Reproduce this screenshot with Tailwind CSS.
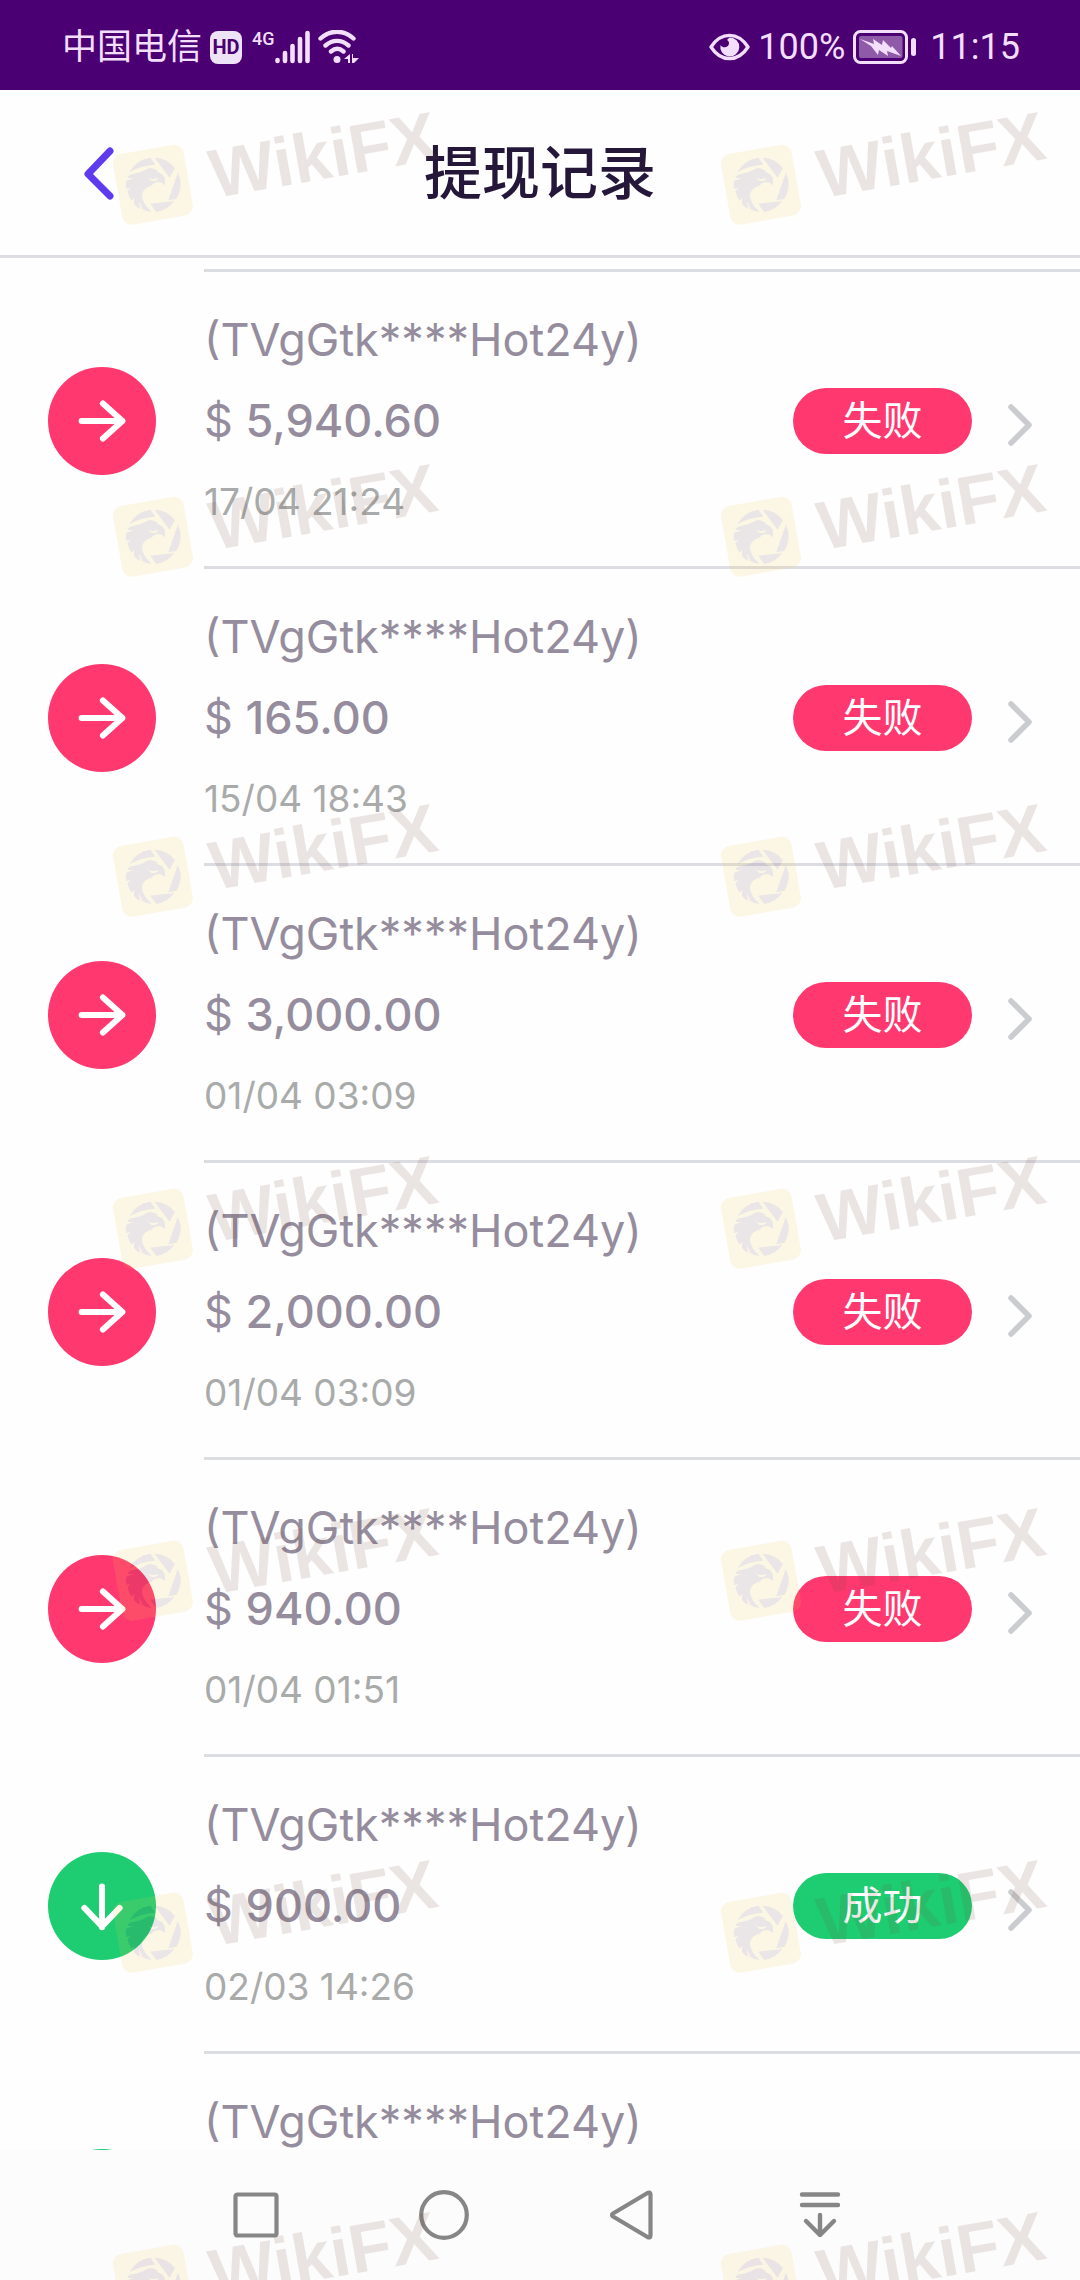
<!DOCTYPE html>
<html lang="zh-CN">
<head>
  <meta charset="UTF-8">
  <meta name="viewport" content="width=device-width, initial-scale=1.0">
  <title>提现记录</title>
  <script src="https://cdn.jsdelivr.net/npm/@tailwindcss/browser@4"></script>
</head>
<body class="relative flex h-screen flex-col overflow-hidden bg-[#fefefe] font-['Inter','Noto_Sans_CJK_SC',sans-serif]">

  <!-- status bar -->
  <div class="flex h-[90px] shrink-0 items-center justify-between bg-[#4a0072] pt-1 pr-[60px] pl-[62px] font-['Roboto','Noto_Sans_CJK_SC',sans-serif] text-[36px] leading-none text-[#f3defc]">
    <div class="flex items-center">
      <span class="text-[35px]">中国电信</span>
      <span class="ml-2 flex h-[33px] w-8 items-center justify-center rounded-lg bg-[#eee2f6] text-[20px] font-bold text-[#4a0072]">HD</span>
      <span class="ml-[10px] self-start text-[18px] font-medium">4G</span>
      <svg class="h-[34px] w-[35px]" viewBox="0 0 35 34" fill="none" stroke="currentColor" stroke-width="4.6" stroke-linecap="round">
        <path d="M2.5 30v1M10 23v8M17.500 16v15M25 9v22M32.500 3v28"/>
      </svg>
      <svg class="ml-2 h-[34px] w-[42px]" viewBox="0 0 42 34" fill="none" stroke="currentColor" stroke-width="4.4" stroke-linecap="round">
        <path d="M2.500 8.500C12-.5 26-.5 35.500 8.500M7.500 15.500c7-6.200 16-6.200 23 0M13 21.500c4-3.500 8.500-3.500 12.500 0"/>
        <circle cx="19" cy="29.500" r="3.500" fill="currentColor" stroke="none"/>
        <path d="M26 29l6-5v9h-2v-4zM34 24h1v4h6l-5 5h-2z" fill="currentColor" stroke="none"/>
      </svg>
    </div>
    <div class="flex items-center">
      <svg class="mr-2 h-[28px] w-[41px]" viewBox="0 0 41 28">
        <path d="M2 14C12-1.500 29-1.500 39 14 29 29.500 12 29.500 2 14z" fill="none" stroke="currentColor" stroke-width="3.400" stroke-linejoin="round"/>
        <path d="M20.500 4.500a9.500 9.500 0 1 1-9 7.500c2 3.500 8 3 8.500-1.500.2-2-1-3-2-3.500z" fill="currentColor"/>
      </svg>
      <span>100%</span>
      <svg class="ml-2 h-[34px] w-[63px]" viewBox="0 0 63 34">
        <rect x="1.500" y="1.500" width="52" height="31" rx="6" fill="none" stroke="currentColor" stroke-width="3"/>
        <rect x="6" y="6" width="43.500" height="22" rx="2" fill="#8f5aa8"/>
        <path d="M7 9l14 5-1-5 9 6 1-5 8 8 1-2 9 10-14-5 1 5-9-6-1 5-7-9z" fill="currentColor"/>
        <rect x="58" y="8" width="5" height="18" rx="2.500" fill="currentColor"/>
      </svg>
      <span class="ml-[14px]">11:15</span>
    </div>
  </div>

  <!-- title bar -->
  <header class="relative flex h-[168px] shrink-0 items-center justify-center border-b-3 border-[#dcdce3]">
    <button type="button" aria-label="返回" class="absolute left-[82px] flex items-center">
      <svg class="h-[54px] w-[33px]" viewBox="0 0 33 54" fill="none" stroke="#5f3bee" stroke-width="7" stroke-linecap="round" stroke-linejoin="round">
        <path d="M28 5L6 28l22 22"/>
      </svg>
    </button>
    <h1 class="text-[58px] leading-none font-medium text-[#25173a]">提现记录</h1>
  </header>

  <!-- withdrawal list -->
  <main class="min-h-0 flex-1 overflow-hidden pt-[11px]">
    <ul id="records"></ul>
  </main>

  <!-- system navigation -->
  <nav class="flex h-[130px] shrink-0 items-center justify-center bg-[#fcfcfc] pr-1 text-[#868686]">
    <button type="button" aria-label="最近任务" class="flex w-[188px] justify-center">
      <svg class="size-[50px]" viewBox="0 0 50 50" fill="none" stroke="currentColor" stroke-width="4.200"><rect x="4.500" y="4.500" width="41" height="41" rx="2"/></svg>
    </button>
    <button type="button" aria-label="主页" class="flex w-[188px] justify-center">
      <svg class="size-[50px]" viewBox="0 0 50 50" fill="none" stroke="currentColor" stroke-width="4.200"><circle cx="25" cy="25" r="22.800"/></svg>
    </button>
    <button type="button" aria-label="后退" class="flex w-[188px] justify-center">
      <svg class="size-[50px]" viewBox="0 0 50 50" fill="none" stroke="currentColor" stroke-width="4.200" stroke-linejoin="round"><path d="M43.500 4.500v41q0 3-3 1.500L6 26.500q-2-1.500 0-3L40.500 3q3-1.500 3 1.500z"/></svg>
    </button>
    <button type="button" aria-label="通知栏" class="flex w-[188px] justify-center">
      <svg class="size-[50px]" viewBox="0 0 50 50" fill="none" stroke="currentColor" stroke-width="4.400" stroke-linecap="round" stroke-linejoin="round"><path d="M7 4.500h36M7 15h36M25 25v20M11 31l14 14 14-14"/></svg>
    </button>
  </nav>

  <!-- watermark layer -->
  <div id="watermarks" class="pointer-events-none absolute inset-0 flex flex-col gap-[280px] overflow-hidden pt-[127px] pl-[115px]" aria-hidden="true"></div>

  <script>
    const records = [
      { amount: '5,940.60', date: '17/04 21:24', ok: false },
      { amount: '165.00', date: '15/04 18:43', ok: false },
      { amount: '3,000.00', date: '01/04 03:09', ok: false },
      { amount: '2,000.00', date: '01/04 03:09', ok: false },
      { amount: '940.00', date: '01/04 01:51', ok: false },
      { amount: '900.00', date: '02/03 14:26', ok: true },
      { amount: '900.00', date: '02/03 14:26', ok: true }
    ];

    const arrows = {
      right: 'M5 25h44M28 6l21 19-21 19',
      down: 'M27 4v44M8 27l19 20 19-20'
    };

    document.getElementById('records').innerHTML = records.map(r => `
      <li class="flex">
        <div class="flex w-[204px] shrink-0 items-center pt-[30px] pb-6 pl-12">
          <div class="flex size-[108px] items-center justify-center rounded-full ${r.ok ? 'bg-[#1ecd72]' : 'bg-[#ff396f]'}">
            <svg class="size-[50px]" viewBox="0 0 54 50" fill="none" stroke="#fff" stroke-width="6.500" stroke-linecap="round" stroke-linejoin="round"><path d="${r.ok ? arrows.down : arrows.right}"/></svg>
          </div>
        </div>
        <div class="flex flex-1 items-center border-t-3 border-[#dcdce3] pt-[27px] pr-12 pb-6 text-[45px] leading-[81px] text-[#958d9d]">
          <div class="flex-1">
            <p>(TVgGtk****Hot24y)</p>
            <p>$ <span class="font-medium">${r.amount}</span></p>
            <p class="text-[37px] leading-[81px] text-[#a9abaa]">${r.date}</p>
          </div>
          <span class="flex h-[66px] w-[179px] items-center justify-center rounded-full text-[40px] leading-none text-white ${r.ok ? 'bg-[#1ecd72]' : 'bg-[#ff396f]'}">${r.ok ? '成功' : '失败'}</span>
          <a href="#" aria-label="详情" class="ml-9 pt-2">
            <svg class="h-[42px] w-6" viewBox="0 0 24 42" fill="none" stroke="#cacccf" stroke-width="5.500" stroke-linecap="round" stroke-linejoin="round"><path d="M3 3l18 18L3 39"/></svg>
          </a>
        </div>
      </li>`).join('');

    const mark = `
      <div class="flex h-[72px] w-[322px] shrink-0 -rotate-10 items-center gap-[22px] opacity-13">
        <svg class="size-[72px] shrink-0" viewBox="0 0 72 72">
          <rect width="72" height="72" rx="10" fill="#f4cc48"/>
          <g transform="rotate(10 36 36) translate(36 36) scale(.3333)" fill="#6d4650">
            <path d="M-70-38A82 82 0 0 1-7-81L7-60Q-35-57-70-38z"/>
            <path d="M5-81A82 82 0 0 1 66-50L50-21z"/>
            <path d="M75-36A82 82 0 0 1 70 43L46 47z"/>
            <path d="M-8 57L64 49A82 82 0 0 1 10 82z"/>
            <path d="M-69-30Q-35-35-12-50 12-49 15-37 33-32 36-17 38-6 35 3 31-6 17-7 4-8-4 3-26 8-32 25-37 52-4 81-18 82-31 74L-41 50Q-42 64-36 73-52 66-57 57L-56 40-64 48Q-74 34-76 20L-66 8-78 14Q-84 0-80-12L-58-20-76-20Q-74-28-69-30z"/>
            <path d="M-20-23Q-6-13 16-20L13-13Q-4-8-8-15z" fill="#f4cc48"/>
          </g>
        </svg>
        <span class="font-['Liberation_Sans',sans-serif] text-[69px] leading-none font-bold text-[#6d4637]">WikiFX</span>
      </div>`;

    // the third row sits a little closer to the second one
    document.getElementById('watermarks').innerHTML = [0, 1, 2, 3, 4, 5, 6].map(i => `
      <div class="flex shrink-0 gap-[286px] ${i === 2 ? '-mt-3' : ''}">${mark}${mark}</div>`).join('');
  </script>

</body>
</html>
